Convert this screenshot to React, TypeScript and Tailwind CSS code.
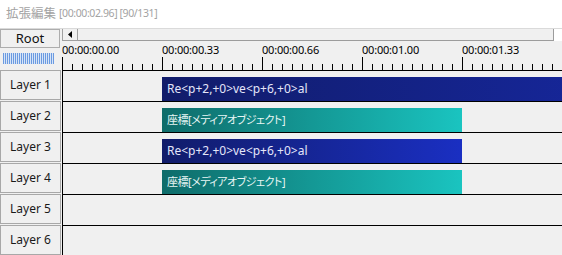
const ui = "font-['Segoe_UI','Noto_Sans','Noto_Sans_CJK_JP',sans-serif]"

const labels = ['00:00:00.00', '00:00:00.33', '00:00:00.66', '00:00:01.00', '00:00:01.33']

type Clip = { kind: 'text' | 'coord'; label: string; width: number }

const layers: { name: string; clip?: Clip }[] = [
  { name: 'Layer 1', clip: { kind: 'text', label: 'Re<p+2,+0>ve<p+6,+0>al', width: 800 } },
  { name: 'Layer 2', clip: { kind: 'coord', label: '座標[メディアオブジェクト]', width: 300 } },
  { name: 'Layer 3', clip: { kind: 'text', label: 'Re<p+2,+0>ve<p+6,+0>al', width: 300 } },
  { name: 'Layer 4', clip: { kind: 'coord', label: '座標[メディアオブジェクト]', width: 300 } },
  { name: 'Layer 5' },
  { name: 'Layer 6' },
]

function Ruler() {
  const ticks = Array.from({ length: 50 }, (_, i) => i * 10)
  return (
    <svg width="500" height="13" className="block">
      { ticks.map(x => (
        <line key={ x } x1={ x + 0.5 } x2={ x + 0.5 } y1={ x % 100 === 0 ? 0 : 7 } y2={ 13 } stroke="#000" strokeWidth="1" />
      )) }
    </svg>
  )
}

function Bar({ clip }: { clip: Clip }) {
  const look = clip.kind === 'text'
    ? 'bg-[linear-gradient(90deg,#111c6a,#1a2fc2)] text-[#e4e6fa] text-[12px]'
    : "bg-[linear-gradient(90deg,#0e6c6a,#1ac4c0)] text-[#e8f6f4] text-[11px] tracking-[-0.5px] [font-feature-settings:'palt']"
  return (
    <div style={{ width: clip.width }} className={`ml-[99px] h-[24px] shrink-0 pl-[5px] leading-[24px] whitespace-nowrap ${ look }`}>
      { clip.label }
    </div>
  )
}

export default function App() {
  return (
    <div className={`w-[562px] h-[255px] overflow-hidden bg-[#f0f0f0] ${ ui }`}>
      <div className="h-[29px] bg-white border-b border-[#dadada] px-[6px] flex items-center text-[#a3a3a3]">
        <span className="text-[12.5px]">拡張編集</span>
        <span className="text-[10.5px] tracking-[-0.4px] ml-[3px]">[00:00:02.96] [90/131]</span>
      </div>

      <div className="flex h-[41px]">
        <div className="w-[62px] shrink-0">
          <div className="w-[60px] h-[19px] border border-[#adadad] flex items-center justify-center text-[13px] text-[#111]">Root</div>
          <div className="ml-[3px] mt-[5px] w-[51px] h-[11px] bg-[repeating-linear-gradient(90deg,#6b9ae0_0_1px,#d6e4f7_1px_2px)]" />
        </div>
        <div className="flex-1 flex flex-col">
          <div className="h-[12px] flex bg-white">
            <div className="w-[16px] h-full bg-[#f0f0f0] border-l border-r border-b border-[#a0a0a0] flex items-center justify-center">
              <svg width="4" height="7"><path d="M4 0 L0 3.5 L4 7 Z" fill="#000" /></svg>
            </div>
            <div className="w-[476px] h-full bg-[#f0f0f0] border-r border-b border-[#9c9c9c]" />
          </div>
          <div className="h-[16px] flex items-center">
            { labels.map(l => (
              <div key={ l } className="w-[100px] shrink-0 text-[11px] leading-none text-black tracking-[-0.2px]">{ l }</div>
            )) }
          </div>
          <Ruler />
        </div>
      </div>

      { layers.map(layer => (
        <div key={ layer.name } className="flex h-[31px]">
          <div className="w-[62px] shrink-0">
            <div className="w-[61px] h-[30px] border border-[#a8a8a8] flex items-center justify-center text-[12px] text-[#1a1a1a]">
              { layer.name }
            </div>
          </div>
          <div className="flex-1 border-t border-l border-black pt-[6px] flex overflow-hidden">
            { layer.clip && <Bar clip={ layer.clip } /> }
          </div>
        </div>
      )) }
    </div>
  )
}
